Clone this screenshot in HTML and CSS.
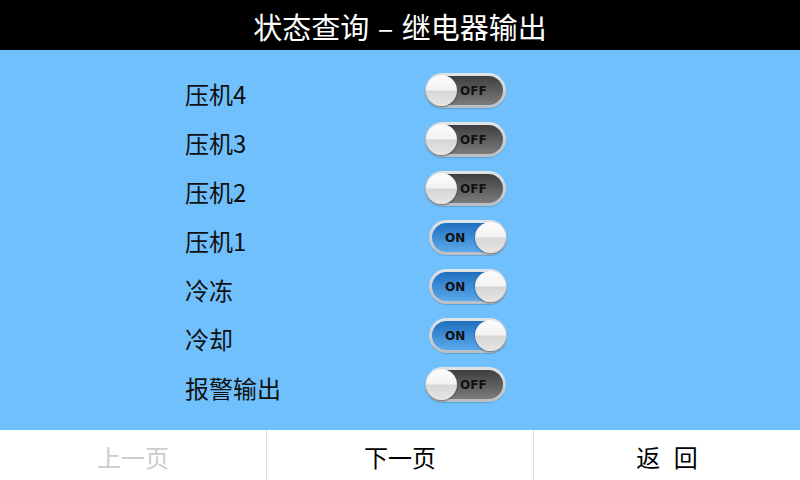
FILE: index.html
```html
<!DOCTYPE html>
<html lang="zh-CN">
<head>
    <meta charset="UTF-8">
    <meta name="viewport" content="width=device-width, initial-scale=1.0">
    <title>状态查询 - 继电器输出</title>
    <link rel="stylesheet" href="styles.css">
</head>
<body>
    <div class="page">
        <div class="header">状态查询 – 继电器输出</div>
        <ul class="list">
            <li><span class="name">压机4</span><span class="switch off"><i class="knob"></i><b>OFF</b></span></li>
            <li><span class="name">压机3</span><span class="switch off"><i class="knob"></i><b>OFF</b></span></li>
            <li><span class="name">压机2</span><span class="switch off"><i class="knob"></i><b>OFF</b></span></li>
            <li><span class="name">压机1</span><span class="switch on"><b>ON</b><i class="knob"></i></span></li>
            <li><span class="name">冷冻</span><span class="switch on"><b>ON</b><i class="knob"></i></span></li>
            <li><span class="name">冷却</span><span class="switch on"><b>ON</b><i class="knob"></i></span></li>
            <li><span class="name">报警输出</span><span class="switch off"><i class="knob"></i><b>OFF</b></span></li>
        </ul>
        <div class="footer">
            <div class="btn disabled">上一页</div>
            <div class="btn">下一页</div>
            <div class="btn wide">返 回</div>
        </div>
    </div>
</body>
</html>
```

FILE: styles.css
```css
*{
    margin: 0;
    padding: 0;
}
body{
    font-family: "Noto Sans CJK SC", "Noto Sans", sans-serif;
}
.page{
    width: 800px;
    height: 480px;
    display: flex;
    flex-direction: column;
    background: #6fc0fc;
}
.header{
    height: 50px;
    line-height: 52px;
    background: #000;
    color: #fff;
    font-size: 29px;
    text-align: center;
    word-spacing: 2px;
}
.list{
    flex: 1;
    padding-top: 16px;
}
.list li{
    list-style: none;
    height: 49px;
    display: flex;
    align-items: center;
    padding-left: 185px;
}
.name{
    width: 240px;
    font-size: 24px;
    color: #111;
    padding-top: 6px;
}
.switch{
    box-sizing: border-box;
    width: 81px;
    height: 35px;
    border-radius: 18px;
    padding: 3px;
    display: flex;
    align-items: center;
    background: linear-gradient(#e2e5e8, #b9bec4);
    box-shadow: 0 1px 1px rgba(0,0,0,0.15);
}
.switch.on{
    width: 78px;
    margin-left: 4px;
}
.switch b{
    flex: 1;
    height: 100%;
    display: flex;
    align-items: center;
    font-family: "DejaVu Sans", sans-serif;
    font-size: 12px;
    font-weight: bold;
    color: #111;
}
.switch.off b{
    background: linear-gradient(#3e3e3e, #7c7c7c);
    border-radius: 0 15px 15px 0;
    margin-left: -16px;
    padding-left: 21px;
}
.switch.on b{
    background: linear-gradient(#1f6fbf, #5aa9ec);
    border-radius: 15px 0 0 15px;
    margin-right: -16px;
    padding-left: 13px;
}
.knob{
    position: relative;
    z-index: 1;
    width: 31px;
    height: 31px;
    border-radius: 50%;
    background: linear-gradient(#fdfdfd 0%, #f2f2f2 48%, #d6d6d6 52%, #e6e6e6 100%);
    box-shadow: 0 1px 2px rgba(0,0,0,0.45);
    margin: 0 -2px;
}
.footer{
    height: 50px;
    display: flex;
    background: #fff;
}
.btn{
    flex: 1;
    text-align: center;
    line-height: 54px;
    font-size: 24px;
    color: #000;
    border-left: 1px solid #ddd;
}
.btn:first-child{
    border-left: none;
}
.btn.wide{
    word-spacing: 8px;
}
.btn.disabled{
    color: #ccc;
}
```
